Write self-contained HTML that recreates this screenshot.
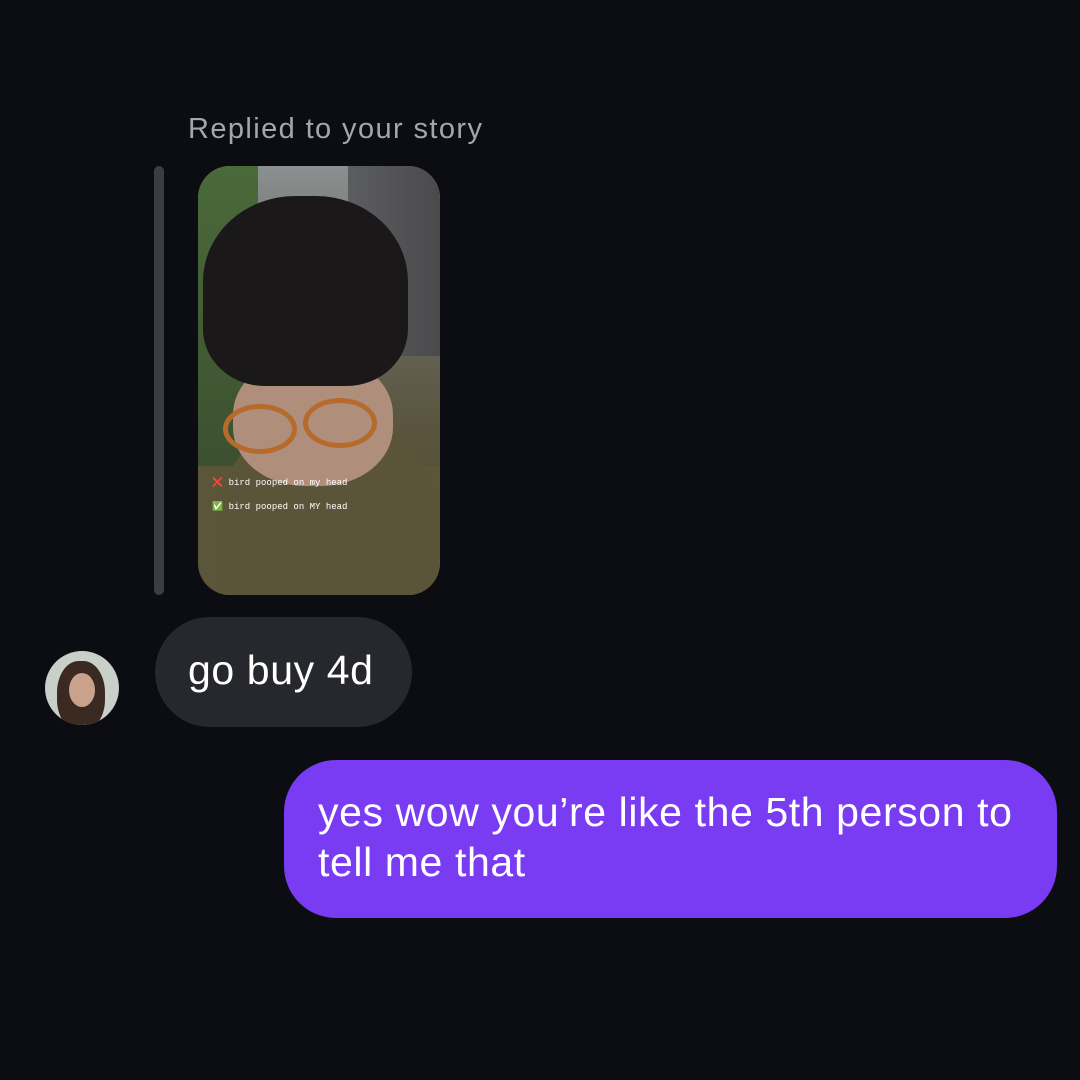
<!DOCTYPE html>
<html><head><meta charset="utf-8"><style>
body{margin:0;width:1080px;height:1080px;background:#0b0d12;position:relative;overflow:hidden;font-family:"Liberation Sans",sans-serif}
.lbl{position:absolute;left:188px;top:113px;color:#a3a6ac;font-size:29px;letter-spacing:1.4px}
.bar{position:absolute;left:154px;top:166px;width:10px;height:429px;border-radius:5px;background:#3a3d43}
.photo{position:absolute;left:198px;top:166px;width:242px;height:429px;border-radius:32px;overflow:hidden;background:linear-gradient(#8a9090 0%,#6b6a62 30%,#5a553e 60%,#4f4a33 100%)}
.photo div{position:absolute}
.bub1{position:absolute;left:155px;top:617px;width:257px;height:110px;border-radius:55px;background:#26282d;color:#fff;font-size:41px;letter-spacing:0.6px;line-height:106px;text-indent:33px}
.av{position:absolute;left:45px;top:651px;width:74px;height:74px;border-radius:50%;overflow:hidden;background:#c9cfc9}
.bub2{position:absolute;left:284px;top:760px;width:773px;height:158px;border-radius:52px;background:#7a3cf3;color:#fff;font-size:41px;letter-spacing:0.6px;line-height:50px;box-sizing:border-box;padding:27px 0 0 34px}
.cap{font-family:"Liberation Mono",monospace;font-size:9px;color:#fff;left:14px}
</style></head><body>
<div class="lbl">Replied to your story</div>
<div class="bar"></div>
<div class="photo">
 <div style="left:150px;top:0;width:92px;height:190px;background:linear-gradient(90deg,#5c5d60,#4a4a4c)"></div>
 <div style="left:0;top:0;width:60px;height:300px;background:linear-gradient(#4a6a3a,#3c5030)"></div>
 <div style="left:0;top:300px;width:242px;height:129px;background:#5b5639"></div>
 <div style="left:20px;top:250px;width:220px;height:200px;border-radius:50% 50% 0 0;background:#5a5439"></div>
 <div style="left:35px;top:190px;width:160px;height:130px;border-radius:45%;background:#b08e7c"></div>
 <div style="left:5px;top:30px;width:205px;height:190px;border-radius:45% 45% 30% 30%;background:#1a1819"></div>
 <div style="left:25px;top:238px;width:64px;height:40px;border:5px solid #b66a2c;border-radius:50%"></div>
 <div style="left:105px;top:232px;width:64px;height:40px;border:5px solid #b66a2c;border-radius:50%"></div>
 <div class="cap" style="top:312px">❌ bird pooped on my head</div>
 <div class="cap" style="top:336px">✅ bird pooped on MY head</div>
</div>
<div class="av">
 <div style="position:absolute;left:12px;top:10px;width:48px;height:70px;border-radius:45%;background:#3a2a22"></div>
 <div style="position:absolute;left:24px;top:22px;width:26px;height:34px;border-radius:50%;background:#c9a28c"></div>
</div>
<div class="bub1">go buy 4d</div>
<div class="bub2">yes wow you’re like the 5th person to<br>tell me that</div>
</body></html>
